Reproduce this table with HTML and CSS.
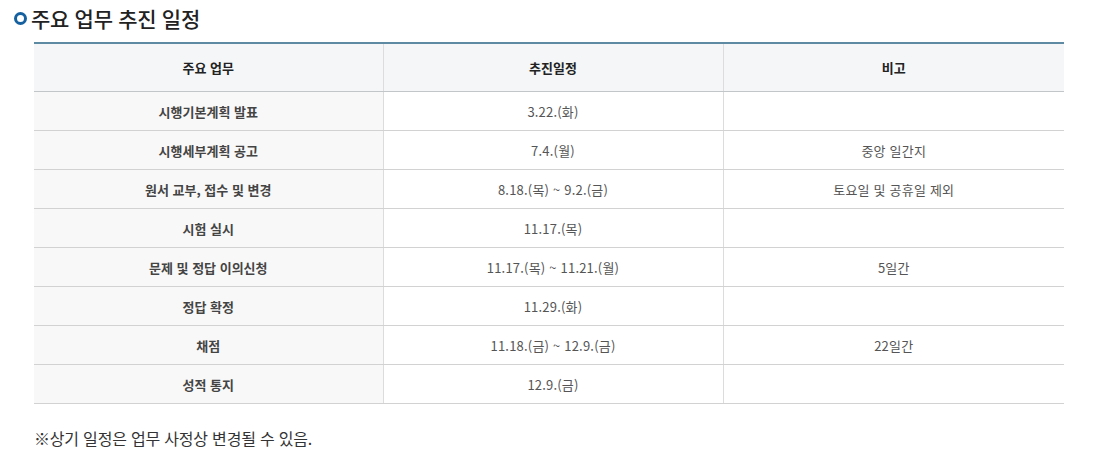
FILE: index.html
```html
<!DOCTYPE html>
<html lang="ko">
<head>
<meta charset="utf-8">
<title>주요 업무 추진 일정</title>
<link rel="stylesheet" href="styles.css">
</head>
<body>
<div class="page">
  <h2 class="title"><span class="ring"></span>주요 업무 추진 일정</h2>
  <table class="schedule">
    <colgroup>
      <col class="c1"><col class="c2"><col class="c3">
    </colgroup>
    <thead>
      <tr><th>주요 업무</th><th>추진일정</th><th>비고</th></tr>
    </thead>
    <tbody>
      <tr><th>시행기본계획 발표</th><td>3.22.(화)</td><td></td></tr>
      <tr><th>시행세부계획 공고</th><td>7.4.(월)</td><td>중앙 일간지</td></tr>
      <tr><th>원서 교부, 접수 및 변경</th><td>8.18.(목) ~ 9.2.(금)</td><td>토요일 및 공휴일 제외</td></tr>
      <tr><th>시험 실시</th><td>11.17.(목)</td><td></td></tr>
      <tr><th>문제 및 정답 이의신청</th><td>11.17.(목) ~ 11.21.(월)</td><td>5일간</td></tr>
      <tr><th>정답 확정</th><td>11.29.(화)</td><td></td></tr>
      <tr><th>채점</th><td>11.18.(금) ~ 12.9.(금)</td><td>22일간</td></tr>
      <tr><th>성적 통지</th><td>12.9.(금)</td><td></td></tr>
    </tbody>
  </table>
  <p class="note">※상기 일정은 업무 사정상 변경될 수 있음.</p>
</div>
</body>
</html>
```

FILE: styles.css
```css
html, body {
  margin: 0;
  padding: 0;
  background: #fff;
}
body {
  font-family: "Noto Sans CJK KR", "Noto Sans", sans-serif;
  color: #333;
}
.page {
  padding: 0 35px 0 34px;
}
.title {
  display: flex;
  align-items: center;
  gap: 4px;
  margin: 0 0 0 -20px;
  height: 35px;
  font-size: 21px;
  font-weight: 500;
  letter-spacing: -0.3px;
  color: #222;
}
.ring {
  display: inline-block;
  flex: none;
  box-sizing: border-box;
  width: 13px;
  height: 13px;
  border: 3.5px solid #15609f;
  border-radius: 50%;
  margin-top: 1px;
}
.schedule {
  margin-top: 7px;
  width: 1030px;
  border-collapse: collapse;
  table-layout: fixed;
  border-top: 2px solid #5e8ba3;
  font-size: 13px;
}
.c1 { width: 349px; }
.c2 { width: 340px; }
.c3 { width: 341px; }
.schedule th,
.schedule td {
  text-align: center;
  border-bottom: 1px solid #d2d2d2;
  border-left: 1px solid #dcdcdc;
  padding: 0;
  height: 38px;
}
.schedule tr > :first-child {
  border-left: none;
}
.schedule thead th {
  background: #f4f6f8;
  height: 47px;
  font-weight: 700;
  color: #222;
  border-bottom-color: #c3c6c9;
}
.schedule tbody th {
  background: #f8f8f8;
  font-weight: 700;
  color: #444;
}
.schedule tbody td {
  color: #555;
  font-weight: 400;
  letter-spacing: 0.2px;
}
.note {
  margin: 22px 0 0;
  font-size: 16px;
  letter-spacing: -0.2px;
  color: #333;
}
```
